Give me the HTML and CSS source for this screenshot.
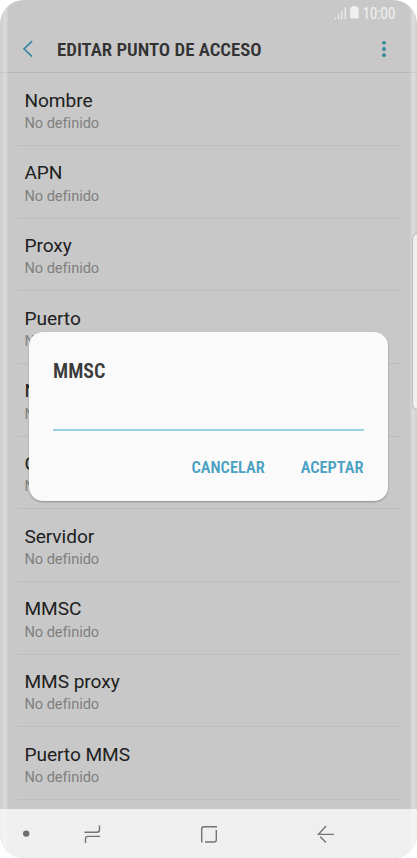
FILE: index.html
```html
<!DOCTYPE html>
<html lang="es">
<head>
<meta charset="utf-8">
<title>Editar punto de acceso</title>
<link rel="stylesheet" href="styles.css">
</head>
<body>
<div class="phone">
  <div class="status">
    <svg class="signal" width="13" height="13" viewBox="0 0 13 13"><path d="M0 12.2L2 10.2V12.2ZM4 7.2h1.2v5H4zM7.3 4h1.2v8.2H7.3zM10.6 .5h1.3v11.7h-1.3z"/></svg>
    <svg class="battery" width="9" height="13" viewBox="0 0 9 13"><path d="M2.3 0h4v1.2H8q.7 0 .7.7v9.7q0 .9-.9.9H1q-.9 0-.9-.9V1.9q0-.7.7-.7h1.5z"/></svg>
    <span class="clock condensed">10:00</span>
  </div>
  <header class="header">
    <svg class="back" width="10" height="18" viewBox="0 0 10 18"><path d="M9.1 1.2L1 8.8l8.1 7.8"/></svg>
    <h1 class="title condensed">EDITAR PUNTO DE ACCESO</h1>
    <svg class="more" width="4" height="18" viewBox="0 0 4 18"><circle cx="2" cy="2.8" r="1.9"/><circle cx="2" cy="9" r="1.9"/><circle cx="2" cy="15.2" r="1.9"/></svg>
  </header>
  <main class="list">
    <div class="row"><div class="name">Nombre</div><div class="value">No definido</div></div>
    <div class="row"><div class="name">APN</div><div class="value">No definido</div></div>
    <div class="row"><div class="name">Proxy</div><div class="value">No definido</div></div>
    <div class="row"><div class="name">Puerto</div><div class="value">No definido</div></div>
    <div class="row"><div class="name">N</div><div class="value">N</div></div>
    <div class="row"><div class="name">C</div><div class="value">N</div></div>
    <div class="row"><div class="name">Servidor</div><div class="value">No definido</div></div>
    <div class="row"><div class="name">MMSC</div><div class="value">No definido</div></div>
    <div class="row"><div class="name">MMS proxy</div><div class="value">No definido</div></div>
    <div class="row"><div class="name">Puerto MMS</div><div class="value">No definido</div></div>
  </main>
  <nav class="nav">
    <svg width="417" height="49" viewBox="0 0 417 49">
      <circle class="dot" cx="26.2" cy="24.6" r="3.2"/>
      <path d="M84.5 23.3H97q2.5 0 2.5-2.5V16.5M100 27.4H88q-2.5 0-2.5 2.5V34"/>
      <path d="M217 17.8H204q-2.3 0-2.3 2.3V33.6M205 33H214q2.3 0 2.3-2.3V21"/>
      <path d="M333.8 25.4H318.6L326 17M320.2 27.8L326 33.6"/>
    </svg>
  </nav>
  <div class="edge left"></div>
  <div class="edge right"></div>
  <div class="handle"></div>
  <section class="dialog">
    <h2 class="dialog-title condensed">MMSC</h2>
    <div class="input"></div>
    <div class="actions">
      <span class="action condensed">CANCELAR</span>
      <span class="action condensed">ACEPTAR</span>
    </div>
  </section>
</div>
</body>
</html>
```
FILE: styles.css
```css
* { box-sizing: border-box; margin: 0; padding: 0; }
body { background: #fff; font-family: Roboto, sans-serif; }
svg { display: block; flex: none; }
.phone {
  position: relative;
  width: 417px;
  height: 858px;
  display: flex;
  flex-direction: column;
  overflow: hidden;
  border-radius: 24px;
  background: #c8c8c8;
}
.condensed { font-family: "Roboto Condensed", Roboto, sans-serif; font-stretch: 75%; white-space: nowrap; }
.status { height: 26px; display: flex; align-items: center; padding-left: 333.5px; color: #f0f0f0; }
.signal, .battery { fill: #f0f0f0; }
.battery { margin: -1px 0 0 3px; }
.clock { margin-left: 4px; padding-top: 2px; font-size: 15.6px; line-height: 24px; letter-spacing: -.4px; }
.header { height: 47px; display: flex; align-items: center; padding-left: 23px; border-bottom: 1px solid #b7b7b7; }
.back { fill: none; stroke: #3786a2; stroke-width: 1.6; }
.title { width: 325px; margin-left: 24px; padding-top: 1px; font-size: 18.8px; font-weight: 600; color: #333; }
.more { fill: #3786a2; }
.list { flex: 1; padding: .3px 17px 0 18px; }
.row { height: 72.68px; padding: 14.4px 0 0 6.4px; border-bottom: 1px solid #bdbdbd; }
.name { font-size: 19.1px; line-height: 25px; letter-spacing: -.04px; color: #202020; }
.value { padding-top: .2px; font-size: 14.6px; line-height: 20px; letter-spacing: -.03px; color: #808080; }
.nav { height: 49px; background: #efefef; }
.nav path { fill: none; stroke: #737373; stroke-width: 1.4; }
.dot { fill: #6e6e6e; }
.edge { position: absolute; top: 0; bottom: 0; width: 9px; background: linear-gradient(90deg, rgba(255,255,255,.1), rgba(255,255,255,.35) 60%, rgba(255,255,255,0)); }
.left { left: 0; }
.right { right: 0; width: 7px; background: linear-gradient(90deg, rgba(255,255,255,.12), rgba(255,255,255,.38) 50%, rgba(255,255,255,.1)); }
.handle { position: absolute; left: 413px; top: 234px; width: 12px; height: 175px; border-radius: 5px; background: #f0f0f0; box-shadow: 0 0 1px 1px #bababa; }
.dialog {
  position: absolute;
  left: 29px;
  top: 332px;
  width: 359px;
  height: 169px;
  padding: 26px 24.5px 0 24px;
  border-radius: 14px;
  background: #fafafa;
  box-shadow: 0 1px 2px rgba(0,0,0,.3);
}
.dialog-title { font-size: 20px; line-height: 26px; font-weight: 600; color: #3c3c3c; }
.input { height: 47px; border-bottom: 2px solid #9bd1e5; }
.actions { display: flex; justify-content: flex-end; gap: 36px; padding-top: 26px; }
.action { font-size: 16.4px; line-height: 22px; font-weight: 600; color: #4ba1c1; }
```
